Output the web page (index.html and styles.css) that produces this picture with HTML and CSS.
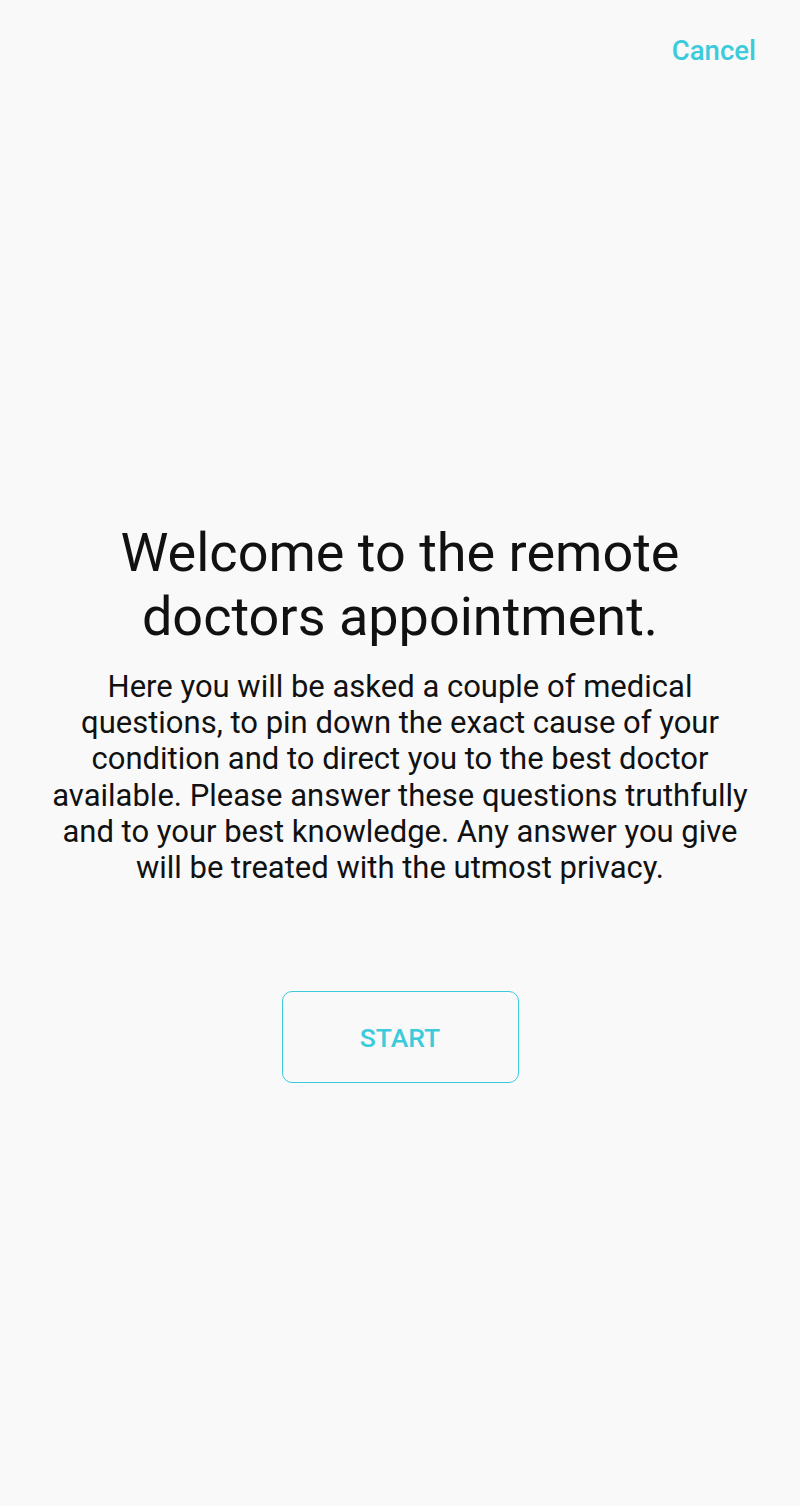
FILE: index.html
```html
<!DOCTYPE html>
<html lang="en">
<head>
<meta charset="utf-8">
<link rel="stylesheet" href="styles.css">
</head>
<body>
<div class="screen">
  <header class="topbar">
    <a class="cancel" href="#">Cancel</a>
  </header>
  <main class="content">
    <h1 class="title">Welcome to the remote doctors appointment.</h1>
    <p class="intro">Here you will be asked a couple of medical questions, to pin down the exact cause of your condition and to direct you to the best doctor available. Please answer these questions truthfully and to your best knowledge. Any answer you give will be treated with the utmost privacy.</p>
    <button class="start">START</button>
  </main>
</div>
</body>
</html>
```
FILE: styles.css
```css
html, body {
  margin: 0;
  padding: 0;
  background: #f9f9fa;
}
body {
  font-family: Roboto, "Liberation Sans", sans-serif;
  color: #111;
}
.screen {
  width: 800px;
  height: 1506px;
  display: flex;
  flex-direction: column;
}
.topbar {
  display: flex;
  justify-content: flex-end;
  padding: 35px 44px 0 0;
  height: 39px;
}
.cancel {
  color: #3ccbdb;
  font-size: 27.5px;
  font-weight: 500;
  text-decoration: none;
  line-height: 32px;
}
.content {
  display: flex;
  flex-direction: column;
  align-items: center;
  padding: 447px 30px 0;
}
.title {
  margin: 0;
  font-size: 54px;
  font-weight: 400;
  line-height: 64px;
  text-align: center;
  width: 620px;
}
.intro {
  margin: 20px 0 0;
  font-size: 31px;
  line-height: 36.2px;
  text-align: center;
  width: 710px;
}
.start {
  margin-top: 105px;
  width: 237px;
  height: 92px;
  border: 1.5px solid #3ccbdb;
  border-radius: 10px;
  background: transparent;
  color: #3ccbdb;
  font-family: Roboto, "Liberation Sans", sans-serif;
  font-size: 26.5px;
  font-weight: 500;
}
```
